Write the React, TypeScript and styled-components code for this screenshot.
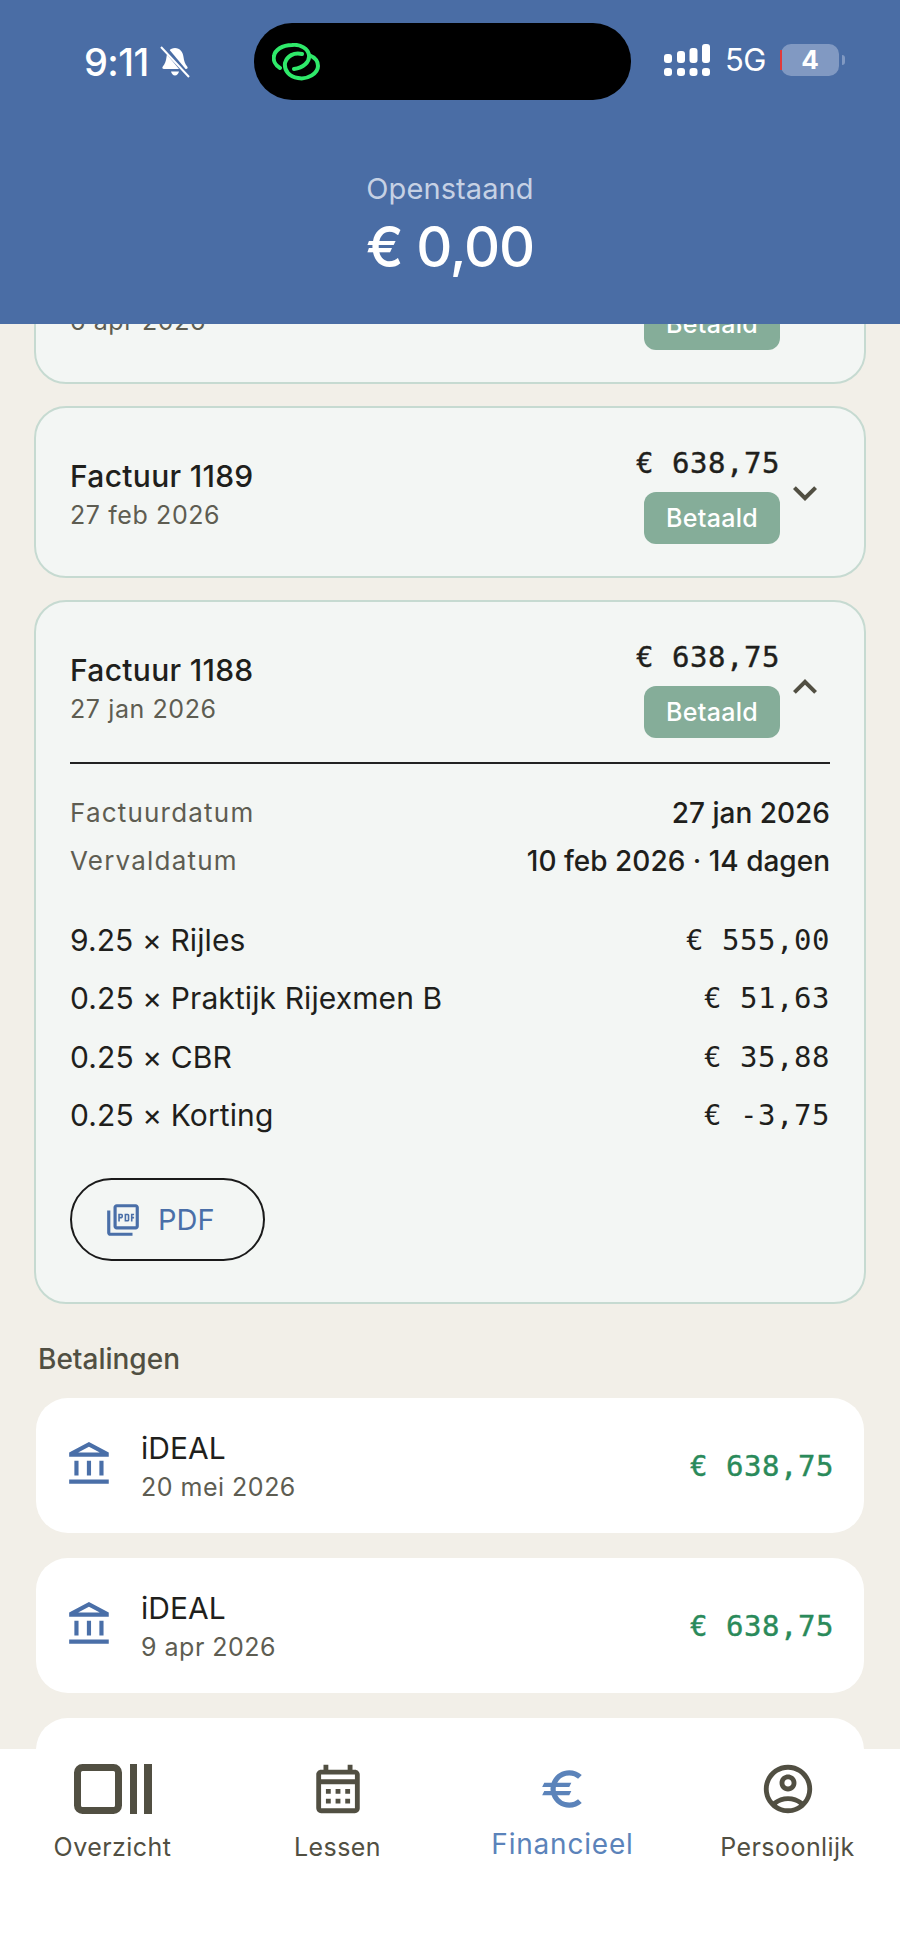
import React from 'react';
import styled, { createGlobalStyle } from 'styled-components';
import {
  MdExpandMore,
  MdExpandLess,
  MdOutlineAccountBalance,
  MdOutlineCalendarMonth,
  MdOutlineAccountCircle,
  MdEuro,
  MdOutlinePictureAsPdf,
} from 'react-icons/md';

const Global = createGlobalStyle`
  html, body { margin: 0; padding: 0; background: #f2efe8; }
  * { box-sizing: border-box; }
`;

const Page = styled.div`
  width: 900px;
  height: 1950px;
  display: flex;
  flex-direction: column;
  overflow: hidden;
  background: #f2efe8;
  font-family: Inter, "Liberation Sans", sans-serif;
  color: #1f1f1c;
`;

const Header = styled.header`
  height: 324px;
  flex: none;
  background: #4a6da5;
  color: #fff;
  position: relative;
  z-index: 2;
  display: flex;
  flex-direction: column;
  align-items: center;
`;

const StatusBar = styled.div`
  align-self: stretch;
  height: 100px;
  padding: 23px 54px 0 84px;
  display: flex;
  align-items: flex-start;
`;

const TimeGroup = styled.div`
  width: 170px;
  height: 77px;
  display: flex;
  align-items: center;
  gap: 11px;
`;

const Time = styled.span`
  font-size: 38px;
  font-weight: 500;
  letter-spacing: -0.6px;
  line-height: 74px;
`;

const Island = styled.div`
  width: 377px;
  height: 77px;
  border-radius: 38px;
  background: #000;
  display: flex;
  align-items: center;
  padding-left: 18px;
`;

const StatusRight = styled.div`
  margin-left: 33px;
  height: 74px;
  display: flex;
  align-items: center;
  gap: 15px;
`;

const Net = styled.span`
  font-size: 31px;
  font-weight: 400;
  letter-spacing: -0.6px;
  line-height: 74px;
  width: 41px;
`;

const Battery = styled.div`
  position: relative;
  width: 58px;
  height: 32px;
  border-radius: 10px;
  background: #8199c2;
  font-size: 26px;
  font-weight: 700;
  line-height: 32px;
  text-align: center;
  &::before {
    content: '';
    position: absolute;
    left: -1px;
    top: 6px;
    width: 2px;
    height: 20px;
    background: #e0393a;
  }
  &::after {
    content: '';
    position: absolute;
    right: -6px;
    top: 11px;
    width: 3px;
    height: 10px;
    border-radius: 0 3px 3px 0;
    background: #8199c2;
  }
`;

const BalanceLabel = styled.div`
  margin-top: 70px;
  font-size: 29px;
  line-height: 38px;
  color: #c6d1e4;
  letter-spacing: 0.1px;
`;

const BalanceValue = styled.div`
  margin-top: 5px;
  font-size: 56px;
  font-weight: 500;
  line-height: 68px;
  letter-spacing: -1.2px;
`;

const Scroller = styled.main`
  flex: 1;
  min-height: 0;
  overflow: hidden;
  padding: 0 34px;
`;

const ScrollContent = styled.div`
  margin-top: -112px;
  display: flex;
  flex-direction: column;
`;

const InvoiceCard = styled.section`
  background: #f3f6f4;
  border: 2px solid #c6dad1;
  border-radius: 32px;
  padding: 0 34px;
  margin-bottom: 22px;
`;

const InvoiceHead = styled.div<{ $open?: boolean }>`
  display: flex;
  align-items: center;
  padding: 34px 0 ${(p) => (p.$open ? '24px' : '32px')};
`;

const InvoiceTitleBlock = styled.div`
  flex: 1;
  padding-top: 8px;
`;

const InvoiceTitle = styled.div`
  font-size: 30px;
  font-weight: 500;
  letter-spacing: 0.3px;
  line-height: 36px;
`;

const MutedDate = styled.div`
  font-size: 25px;
  line-height: 42px;
  color: #5e5d52;
  letter-spacing: 0.6px;
`;

const AmountBlock = styled.div`
  display: flex;
  flex-direction: column;
  align-items: flex-end;
  gap: 8px;
`;

const Mono = styled.span`
  font-family: "DejaVu Sans Mono", "Liberation Mono", monospace;
  font-size: 29px;
  letter-spacing: 0.54px;
  white-space: pre;
`;

const InvoiceAmount = styled(Mono)`
  -webkit-text-stroke: 0.4px currentColor;
  line-height: 42px;
`;

const Badge = styled.div`
  width: 136px;
  height: 52px;
  border-radius: 12px;
  background: #85ad99;
  color: #fff;
  font-size: 25px;
  font-weight: 500;
  letter-spacing: 0.3px;
  line-height: 52px;
  text-align: center;
`;

const ChevronSlot = styled.div`
  width: 50px;
  display: flex;
  justify-content: center;
  color: #514f42;
  font-size: 48px;
  svg { display: block; }
`;

const Details = styled.div`
  border-top: 2px solid #222;
  padding-top: 25px;
`;

const MetaRow = styled.div`
  display: flex;
  justify-content: space-between;
  height: 48px;
  line-height: 48px;
`;

const MetaLabel = styled.span`
  font-size: 26px;
  color: #5e5d52;
  letter-spacing: 1.2px;
`;

const MetaValue = styled.span`
  font-size: 28px;
  font-weight: 500;
`;

const Lines = styled.div`
  margin-top: 26px;
`;

const LineRow = styled.div`
  display: flex;
  justify-content: space-between;
  height: 58.33px;
  line-height: 58px;
  font-size: 30px;
  letter-spacing: 0.1px;
`;

const LineAmount = styled(Mono)`
  line-height: 58px;
  letter-spacing: 0.54px;
`;

const PdfButton = styled.button`
  margin: 34px 0 41px;
  width: 195px;
  height: 83px;
  display: flex;
  align-items: center;
  gap: 16px;
  padding: 0 0 0 32px;
  background: transparent;
  border: 2px solid #1a1a1a;
  border-radius: 42px;
  color: #4a6fa8;
  font-family: inherit;
  font-size: 29px;
  svg { display: block; flex: none; }
`;

const SectionTitle = styled.h2`
  margin: 13px 0 19px 4px;
  font-size: 28px;
  font-weight: 500;
  line-height: 40px;
  color: #514f42;
`;

const PaymentCard = styled.div`
  height: 135px;
  margin: 0 2px 25px;
  padding: 0 30px 0 29px;
  background: #fff;
  border-radius: 32px;
  display: flex;
  align-items: center;
  flex: none;
`;

const BankIcon = styled(MdOutlineAccountBalance)`
  flex: none;
  color: #4a6fa8;
  display: block;
  margin-top: -2px;
`;

const PaymentText = styled.div`
  flex: 1;
  margin-left: 26px;
  padding-top: 4px;
`;

const PaymentName = styled.div`
  font-size: 30px;
  line-height: 36px;
`;

const PaymentDate = styled.div`
  font-size: 25px;
  line-height: 36px;
  margin-top: 3px;
  color: #5e5d52;
  letter-spacing: 0.5px;
`;

const PaymentAmount = styled(Mono)`
  -webkit-text-stroke: 0.4px currentColor;
  color: #2a8a5a;
`;

const Nav = styled.nav`
  flex: none;
  height: 201px;
  position: relative;
  z-index: 2;
  background: #fff;
  display: grid;
  grid-template-columns: repeat(4, 225px);
  padding-top: 15px;
`;

const NavItem = styled.div`
  display: flex;
  flex-direction: column;
  align-items: center;
`;

const NavIcon = styled.div<{ $active?: boolean }>`
  height: 49px;
  display: flex;
  justify-content: center;
  align-items: center;
  color: ${(p) => (p.$active ? '#5b83ba' : '#514f42')};
  svg { display: block; flex: none; }
`;

const NavLabel = styled.div<{ $active?: boolean }>`
  margin-top: ${(p) => (p.$active ? '13px' : '16px')};
  font-size: ${(p) => (p.$active ? '28px' : '25px')};
  line-height: 36px;
  letter-spacing: ${(p) => (p.$active ? '0.8px' : '0.45px')};
  color: ${(p) => (p.$active ? '#5b83ba' : '#514f42')};
`;

const Bell = () => (
  <svg width="30" height="32" viewBox="0 0 30 32" aria-hidden="true">
    <path fill="#fff" d="M15 2c-5 0-8 4-8.500 9-.4 4-1.500 7-3.700 9.500-1 1.200-.3 2.500 1.200 2.500h22c1.500 0 2.200-1.300 1.200-2.500C25 18 24 15 23.500 11 23 6 20 2 15 2zM11 25.500c.5 2.300 2 4 4 4s3.500-1.700 4-4z" />
    <path stroke="#4a6da5" strokeWidth="5" d="M3 0l26 31" />
    <path stroke="#fff" strokeWidth="2" d="M1 1l28 30" />
  </svg>
);

const Link = () => (
  <svg width="48" height="38" viewBox="0 0 48 38" fill="none" stroke="#2fe96a" strokeWidth="4" strokeLinecap="round" aria-hidden="true">
    <path d="M8 25C3 22 1 17 2 13 3 7 10 2 20 2 29 1 36 6 37 12 38 19 31 25 22 26" />
    <path d="M30 11C22 9 15 13 13 20 12 27 17 34 26 35 36 37 46 30 46 23 46 18 42 14 37 12" />
  </svg>
);

const Signal = () => (
  <svg width="46" height="32" viewBox="0 0 46 32" fill="#fff" aria-hidden="true">
    <rect x="0" y="10" width="8" height="9" rx="3" />
    <rect x="13" y="7" width="8" height="12" rx="3" />
    <rect x="25.500" y="4" width="8" height="15" rx="3" />
    <rect x="38" y="0" width="8" height="19" rx="3" />
    <rect x="0" y="24" width="8" height="8" rx="3" />
    <rect x="13" y="24" width="8" height="8" rx="3" />
    <rect x="25.500" y="24" width="8" height="8" rx="3" />
    <rect x="38" y="24" width="8" height="8" rx="3" />
  </svg>
);

const ColumnsIcon = () => (
  <svg width="78" height="50" viewBox="0 0 78 50" aria-hidden="true">
    <rect x="3.500" y="3.500" width="41" height="43" rx="5" fill="none" stroke="currentColor" strokeWidth="7" />
    <rect x="56" y="0" width="7" height="50" fill="currentColor" />
    <rect x="70" y="0" width="8" height="50" fill="currentColor" />
  </svg>
);

const Invoice = ({ title, date, open, children }: { title: string; date: string; open?: boolean; children?: React.ReactNode }) => (
  <InvoiceCard>
    <InvoiceHead $open={open}>
      <InvoiceTitleBlock>
        <InvoiceTitle>{title}</InvoiceTitle>
        <MutedDate>{date}</MutedDate>
      </InvoiceTitleBlock>
      <AmountBlock>
        <InvoiceAmount>€ 638,75</InvoiceAmount>
        <Badge>Betaald</Badge>
      </AmountBlock>
      <ChevronSlot>{open ? <MdExpandLess /> : <MdExpandMore />}</ChevronSlot>
    </InvoiceHead>
    {children}
  </InvoiceCard>
);

const Payment = ({ date }: { date: string }) => (
  <PaymentCard>
    <BankIcon size={50} />
    <PaymentText>
      <PaymentName>iDEAL</PaymentName>
      <PaymentDate>{date}</PaymentDate>
    </PaymentText>
    <PaymentAmount>€ 638,75</PaymentAmount>
  </PaymentCard>
);

const lines = [
  ['9.25 × Rijles', '€ 555,00'],
  ['0.25 × Praktijk Rijexmen B', '€ 51,63'],
  ['0.25 × CBR', '€ 35,88'],
  ['0.25 × Korting', '€ -3,75'],
];

export default function App() {
  return (
    <Page>
      <Global />
      <Header>
        <StatusBar>
          <TimeGroup>
            <Time>9:11</Time>
            <Bell />
          </TimeGroup>
          <Island>
            <Link />
          </Island>
          <StatusRight>
            <Signal />
            <Net>5G</Net>
            <Battery>4</Battery>
          </StatusRight>
        </StatusBar>
        <BalanceLabel>Openstaand</BalanceLabel>
        <BalanceValue>€ 0,00</BalanceValue>
      </Header>
      <Scroller>
        <ScrollContent>
          <Invoice title="Factuur 1190" date="6 apr 2026" />
          <Invoice title="Factuur 1189" date="27 feb 2026" />
          <Invoice title="Factuur 1188" date="27 jan 2026" open>
            <Details>
              <MetaRow>
                <MetaLabel>Factuurdatum</MetaLabel>
                <MetaValue>27 jan 2026</MetaValue>
              </MetaRow>
              <MetaRow>
                <MetaLabel>Vervaldatum</MetaLabel>
                <MetaValue>10 feb 2026 · 14 dagen</MetaValue>
              </MetaRow>
              <Lines>
                {lines.map(([name, amount]) => (
                  <LineRow key={name}>
                    <span>{name}</span>
                    <LineAmount>{amount}</LineAmount>
                  </LineRow>
                ))}
              </Lines>
              <PdfButton>
                <MdOutlinePictureAsPdf size={38} />
                PDF
              </PdfButton>
            </Details>
          </Invoice>
          <SectionTitle>Betalingen</SectionTitle>
          <Payment date="20 mei 2026" />
          <Payment date="9 apr 2026" />
          <Payment date="6 mrt 2026" />
        </ScrollContent>
      </Scroller>
      <Nav>
        <NavItem>
          <NavIcon><ColumnsIcon /></NavIcon>
          <NavLabel>Overzicht</NavLabel>
        </NavItem>
        <NavItem>
          <NavIcon><MdOutlineCalendarMonth size={58} /></NavIcon>
          <NavLabel>Lessen</NavLabel>
        </NavItem>
        <NavItem>
          <NavIcon $active><MdEuro size={50} /></NavIcon>
          <NavLabel $active>Financieel</NavLabel>
        </NavItem>
        <NavItem>
          <NavIcon><MdOutlineAccountCircle size={58} /></NavIcon>
          <NavLabel>Persoonlijk</NavLabel>
        </NavItem>
      </Nav>
    </Page>
  );
}
